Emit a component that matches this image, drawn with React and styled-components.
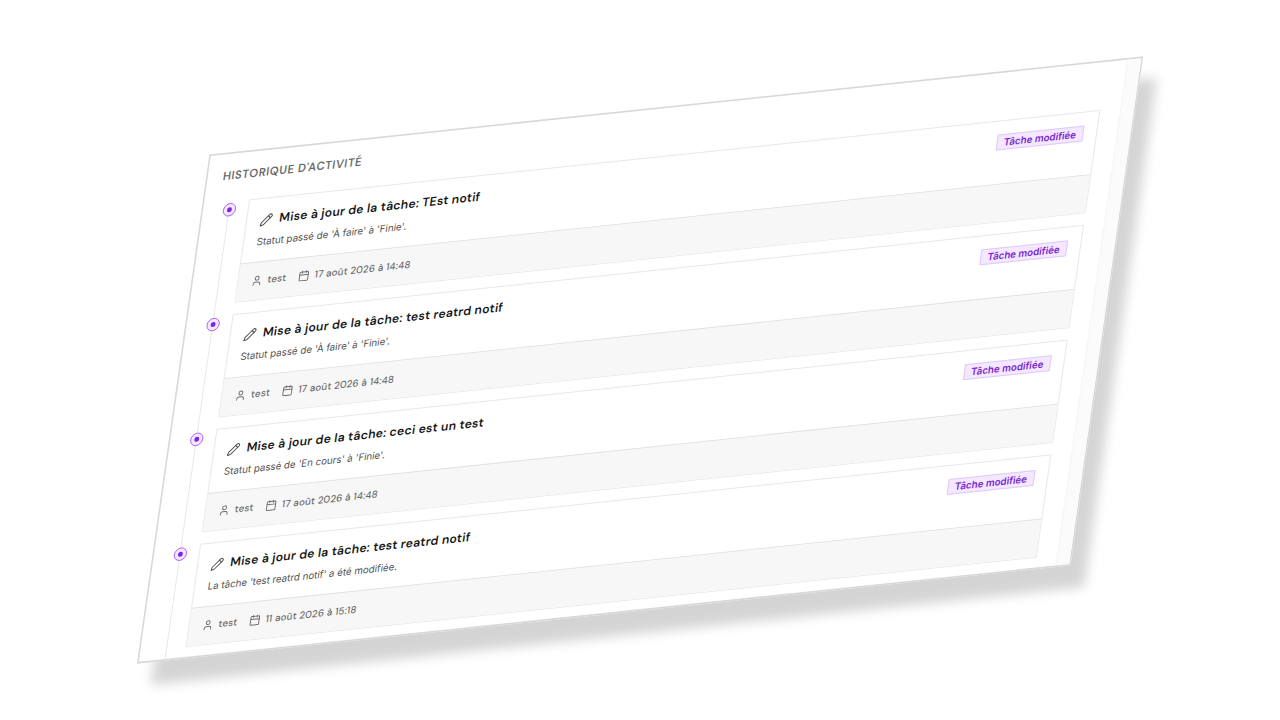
import React from "react";
import styled, { createGlobalStyle } from "styled-components";
import { Pencil, User, Calendar } from "lucide-react";

const GlobalStyle = createGlobalStyle`
  * { box-sizing: border-box; }
  body {
    margin: 0;
    background: #ffffff;
    font-family: "DM Sans", Inter, "Liberation Sans", sans-serif;
  }
`;

const Page = styled.main`
  min-height: 100vh;
  display: flex;
  align-items: center;
  justify-content: center;
  overflow: hidden;
`;

const Panel = styled.section`
  width: 90%;
  display: flex;
  background: #ffffff;
  border: 2px solid #d8d8d8;
  box-shadow: 21px 28px 14px rgba(0, 0, 0, 0.17);
  transform: rotate(-6deg) skewX(-14.1deg) scale(0.815);
`;

const Content = styled.div`
  flex: 1;
  min-width: 0;
  padding: 16px 25px 0 19px;
`;

const ScrollTrack = styled.div`
  width: 17px;
  background: #fbfbfb;
  border-left: 1px solid #f3f3f3;
`;

const Heading = styled.h2`
  margin: 0 0 22px;
  font-size: 14px;
  line-height: 20px;
  font-weight: 600;
  letter-spacing: 0.05em;
  text-transform: uppercase;
  color: #6b6b6b;
`;

const Timeline = styled.ol`
  list-style: none;
  margin: 0;
  padding: 0 0 12px 14px;
  display: flex;
  flex-direction: column;
  gap: 14px;
  background: linear-gradient(#e4e4e4, #e4e4e4) 13px 8px / 1px 100% no-repeat;
`;

const Entry = styled.li`
  display: flex;
  align-items: flex-start;
  gap: 15px;
`;

const Marker = styled.span`
  width: 16px;
  height: 16px;
  margin: 2px 0 0 -8px;
  display: flex;
  align-items: center;
  justify-content: center;
  border: 1px solid #a04ffa;
  border-radius: 50%;
  background: #f3e8ff;

  &::after {
    content: "";
    width: 6px;
    height: 6px;
    border-radius: 50%;
    background: #7c22f0;
  }
`;

const Card = styled.article`
  flex: 1;
  min-width: 0;
  border: 1px solid #e5e5e5;
  background: #ffffff;
`;

const CardBody = styled.div`
  display: flex;
  align-items: flex-start;
  justify-content: space-between;
  padding: 16px;
`;

const Title = styled.h3`
  margin: 0;
  display: flex;
  align-items: center;
  gap: 8px;
  font-size: 15px;
  line-height: 19px;
  font-weight: 600;
  letter-spacing: 0.02em;
  color: #171717;

  svg { color: #525252; }
`;

const Description = styled.p`
  margin: 9px 0 0;
  font-family: Inter, sans-serif;
  font-size: 12px;
  line-height: 16px;
  color: #525252;
`;

const Badge = styled.span`
  padding: 1px 8px;
  border: 1px solid #dcc2fd;
  background: #f3e8ff;
  color: #7a26cf;
  font-family: Inter, sans-serif;
  font-size: 12px;
  line-height: 15px;
  font-weight: 600;
  white-space: nowrap;
`;

const CardFooter = styled.footer`
  display: flex;
  gap: 15px;
  padding: 12px 16px 13px;
  border-top: 1px solid #e0e0e0;
  background: #f7f7f7;
`;

const Meta = styled.span`
  display: flex;
  align-items: center;
  gap: 6px;
  font-size: 12px;
  line-height: 20px;
  font-weight: 500;
  letter-spacing: 0.02em;
  color: #6b6b6b;
`;

const entries = [
  { title: "Mise à jour de la tâche: TEst notif", text: "Statut passé de 'À faire' à 'Finie'.", date: "17 août 2026 à 14:48" },
  { title: "Mise à jour de la tâche: test reatrd notif", text: "Statut passé de 'À faire' à 'Finie'.", date: "17 août 2026 à 14:48" },
  { title: "Mise à jour de la tâche: ceci est un test", text: "Statut passé de 'En cours' à 'Finie'.", date: "17 août 2026 à 14:48" },
  { title: "Mise à jour de la tâche: test reatrd notif", text: "La tâche 'test reatrd notif' a été modifiée.", date: "11 août 2026 à 15:18" },
];

export default function App() {
  return (
    <>
      <GlobalStyle />
      <Page>
        <Panel>
          <Content>
            <Heading>Historique d'activité</Heading>
            <Timeline>
              {entries.map((entry, index) => (
                <Entry key={index}>
                  <Marker />
                  <Card>
                    <CardBody>
                      <div>
                        <Title>
                          <Pencil size={16} />
                          {entry.title}
                        </Title>
                        <Description>{entry.text}</Description>
                      </div>
                      <Badge>Tâche modifiée</Badge>
                    </CardBody>
                    <CardFooter>
                      <Meta>
                        <User size={14} />
                        test
                      </Meta>
                      <Meta>
                        <Calendar size={14} />
                        <time>{entry.date}</time>
                      </Meta>
                    </CardFooter>
                  </Card>
                </Entry>
              ))}
            </Timeline>
          </Content>
          <ScrollTrack />
        </Panel>
      </Page>
    </>
  );
}
